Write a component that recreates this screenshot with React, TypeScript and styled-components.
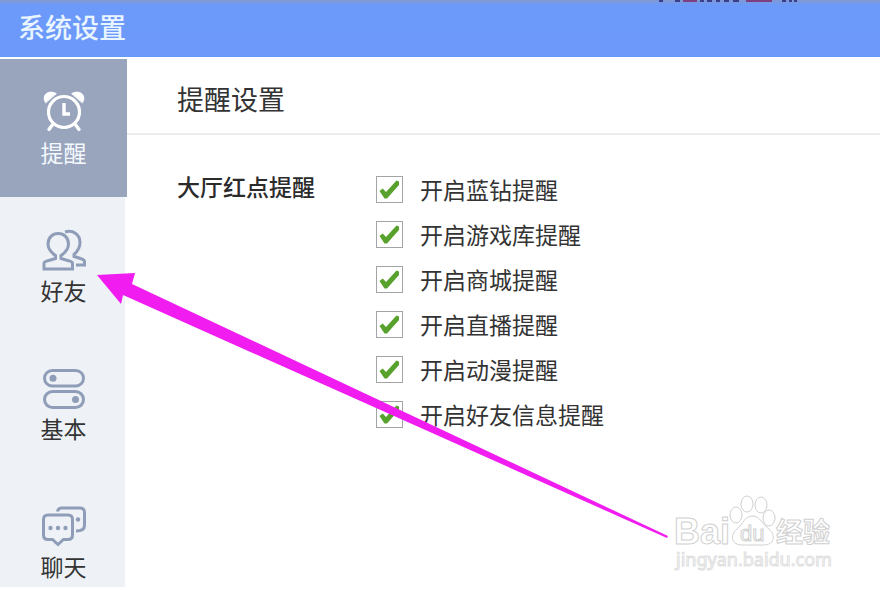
import React from 'react';
import styled, { createGlobalStyle } from 'styled-components';

const GlobalStyle = createGlobalStyle`
  *, *::before, *::after { box-sizing: border-box; }
  body {
    margin: 0;
    background: #fff;
    color: #333;
    font-family: "Noto Sans CJK SC", "Liberation Sans", sans-serif;
  }
`;

const Page = styled.div`
  position: relative;
  display: flex;
  flex-direction: column;
  height: 100vh;
  overflow: hidden;
  padding-bottom: 3px;
`;

const TitleBar = styled.header`
  position: relative;
  flex: none;
  display: flex;
  align-items: center;
  height: 57px;
  padding: 0 18px 4px;
  background: linear-gradient(#8199d0 0, #6c9afa 5px, #6c99fa 55px, #609af3 57px);
`;

const WindowTitle = styled.h1`
  margin: 0;
  font-size: 27px;
  line-height: 36px;
  font-weight: 500;
  color: #e9f5ff;
`;

const Scrap = styled.svg`
  position: absolute;
  top: 0;
  right: 80px;
`;

const Body = styled.div`
  flex: 1;
  display: flex;
  min-height: 0;
  padding-top: 2px;
`;

const Sidebar = styled.nav`
  flex: none;
  width: 125px;
  overflow-y: clip;
  background: #eef2f6;
`;

const NavItem = styled.button<{ $active?: boolean }>`
  display: flex;
  flex-direction: column;
  align-items: center;
  gap: 2px;
  width: 127px;
  height: 138px;
  padding: 30px 0 0;
  border: 0;
  font: inherit;
  font-size: 23px;
  line-height: 34px;
  cursor: pointer;
  background: ${(p) => (p.$active ? '#98a5bd' : 'transparent')};
  color: ${(p) => (p.$active ? '#f5f9ff' : '#333')};

  svg {
    display: block;
    flex: none;
    color: ${(p) => (p.$active ? '#fff' : '#8f9db8')};
  }
`;

const Content = styled.main`
  flex: 1;
  min-width: 0;
  padding-left: 2px;
`;

const SectionTitle = styled.h2`
  margin: 0;
  padding: 21px 50px 15px;
  border-bottom: 2px solid #ececec;
  font-size: 27px;
  line-height: 38px;
  font-weight: 400;
`;

const Group = styled.fieldset`
  display: flex;
  gap: 61px;
  margin: 0;
  padding: 31px 50px;
  border: 0;
`;

const GroupLabel = styled.div`
  flex: none;
  font-size: 23px;
  line-height: 40px;
  font-weight: 500;
  color: #2b2b2b;
`;

const Options = styled.div`
  display: flex;
  flex-direction: column;
  gap: 5px;
  padding-top: 3px;
`;

const Option = styled.label`
  display: flex;
  align-items: center;
  gap: 17px;
  font-size: 23px;
  line-height: 40px;
  cursor: pointer;
`;

const Box = styled.span`
  display: grid;
  width: 27px;
  height: 27px;

  > * { grid-area: 1 / 1; }
`;

const Tick = styled.input`
  appearance: none;
  width: 27px;
  height: 27px;
  margin: 0;
  border: 1px solid #a2a4a6;
  background: #fff;

  & + svg { visibility: hidden; pointer-events: none; }
  &:checked + svg { visibility: visible; }
`;

const Arrow = styled.svg`
  position: absolute;
  left: 97px;
  top: 272px;
  pointer-events: none;
`;

const Watermark = styled.svg`
  position: absolute;
  right: 44px;
  bottom: 12px;
  pointer-events: none;
`;

const AlarmIcon = () => (
  <svg width="44" height="44" viewBox="0 0 44 44" fill="none" stroke="currentColor" strokeWidth="3.2" strokeLinecap="round">
    <circle cx="22" cy="23" r="15.5" />
    <path d="M22 14v11h6" strokeLinecap="butt" strokeWidth="3.4" />
    <path d="M11 35l-4 5.500M33 35l4 5.500" strokeWidth="3.4" />
    <path d="M3.500 13.500C-1 7 6 0 14 4.500Z M40.500 13.500C45 7 38 0 30 4.500Z" fill="currentColor" strokeWidth="1" />
  </svg>
);

const FriendsIcon = () => (
  <svg width="44" height="44" viewBox="0 0 44 44" fill="none" stroke="currentColor" strokeWidth="3">
    <path d="M2 42v-6c0-1.500 5-2.500 11.500-4.500v-3C9 25.500 6 22 6 17 6 10.500 10.500 6.500 16.200 6.500S26.500 10.500 26.500 17c0 5-3 8.500-7.500 11.500v3c6.500 2 11.500 3 11.500 4.500v6Z" />
    <path d="M23 5C31.500 2.500 38 8 38 15.500c0 5-2 8.500-6 12v2c5 1.500 10.500 3 10.500 5v3.500h-8.500" />
  </svg>
);

const SwitchesIcon = () => (
  <svg width="44" height="44" viewBox="0 0 44 44" fill="none" stroke="currentColor" strokeWidth="3">
    <rect x="2.500" y="5.500" width="39" height="15.500" rx="7.750" />
    <circle cx="11" cy="13.300" r="3.500" fill="currentColor" stroke="none" />
    <rect x="2.500" y="26.500" width="39" height="16" rx="8" />
    <circle cx="33.500" cy="34.500" r="3.500" fill="currentColor" stroke="none" />
  </svg>
);

const ChatIcon = () => (
  <svg width="44" height="44" viewBox="0 0 44 44" fill="none" stroke="currentColor" strokeWidth="3">
    <path d="M6 12h20c3 0 4.500 1.500 4.500 4.500v15.500c0 3-1.500 4.500-4.500 4.500h-4.500l-5.500 5-5.500-5H6c-3 0-4.500-1.500-4.500-4.500V16.500C1.500 13.500 3 12 6 12Z" />
    <path d="M15.500 8.500c.5-2.500 2-3.500 4-3.500h18.500c3 0 4.500 1.500 4.500 4.500v13c0 4-3 5.500-8.500 5.500" />
    <g fill="currentColor" stroke="none">
      <circle cx="8.500" cy="25" r="2.200" /><circle cx="16" cy="25" r="2.200" /><circle cx="23.500" cy="25" r="2.200" />
      <circle cx="36" cy="16.500" r="2.200" />
    </g>
  </svg>
);

const CheckMark = () => (
  <svg width="27" height="27" viewBox="0 0 27 27" fill="#58a12c" aria-hidden="true">
    <path d="M3.500 15l3.200-2.500 3.300 3.500L20.500 4.500l2.500 1v3.500L11 22.500H8.500Z" />
  </svg>
);

const navItems = [
  { label: '提醒', Icon: AlarmIcon, active: true },
  { label: '好友', Icon: FriendsIcon },
  { label: '基本', Icon: SwitchesIcon },
  { label: '聊天', Icon: ChatIcon },
];

const options = [
  '开启蓝钻提醒',
  '开启游戏库提醒',
  '开启商城提醒',
  '开启直播提醒',
  '开启动漫提醒',
  '开启好友信息提醒',
];

export default function App() {
  return (
    <Page>
      <GlobalStyle />
      <TitleBar>
        <WindowTitle>系统设置</WindowTitle>
        <Scrap width="144" height="4" viewBox="0 0 144 4" fill="none" strokeWidth="2" aria-hidden="true">
          <path d="M3 1h4M19 1h5M44 1h4M51 1h5M60 1h4M68 1h5M77 1h6M126 1h4M133 1h3M138 1h3" stroke="#3a3f8c" />
          <path d="M27 1h14M90 1h26" stroke="#7c3f82" />
        </Scrap>
      </TitleBar>
      <Body>
        <Sidebar aria-label="系统设置">
          {navItems.map(({ label, Icon, active }) => (
            <NavItem key={label} type="button" $active={active} aria-current={active ? 'page' : undefined}>
              <Icon />
              {label}
            </NavItem>
          ))}
        </Sidebar>
        <Content>
          <SectionTitle>提醒设置</SectionTitle>
          <Group aria-labelledby="hall-alerts">
            <GroupLabel id="hall-alerts">大厅红点提醒</GroupLabel>
            <Options>
              {options.map((label) => (
                <Option key={label}>
                  <Box>
                    <Tick type="checkbox" defaultChecked />
                    <CheckMark />
                  </Box>
                  {label}
                </Option>
              ))}
            </Options>
          </Group>
        </Content>
      </Body>
      <Arrow width="572" height="268" viewBox="0 0 572 268" fill="#f01cf0" aria-hidden="true">
        <path d="M0 3L38 1L35 12L571 264L570 266L26 23L24 32Z" />
      </Arrow>
      <Watermark width="164" height="84" viewBox="0 0 164 84" fill="#fff" stroke="#d0d0d0" strokeWidth="1" aria-hidden="true">
        <text x="2" y="50" fontSize="36" fontWeight="700" fontFamily="Liberation Sans, sans-serif">Bai</text>
        <ellipse cx="64" cy="21" rx="6" ry="8" />
        <ellipse cx="75" cy="10" rx="6" ry="8" />
        <ellipse cx="89" cy="11" rx="6" ry="8" />
        <ellipse cx="97" cy="24" rx="6" ry="8" />
        <path d="M80 22c8 0 10 8 17 13 8 7 4 16-5 16H70c-10 0-13-9-5-16 6-5 8-13 15-13Z" />
        <text x="68" y="47" fontSize="22" fontFamily="Liberation Sans, sans-serif">du</text>
        <text x="104" y="48" fontSize="27" fontWeight="700" fontFamily="Noto Sans CJK SC, sans-serif">经验</text>
        <text x="4" y="72" fontSize="18" fontFamily="Noto Sans, sans-serif" stroke="#dedede">jingyan.baidu.com</text>
      </Watermark>
    </Page>
  );
}
